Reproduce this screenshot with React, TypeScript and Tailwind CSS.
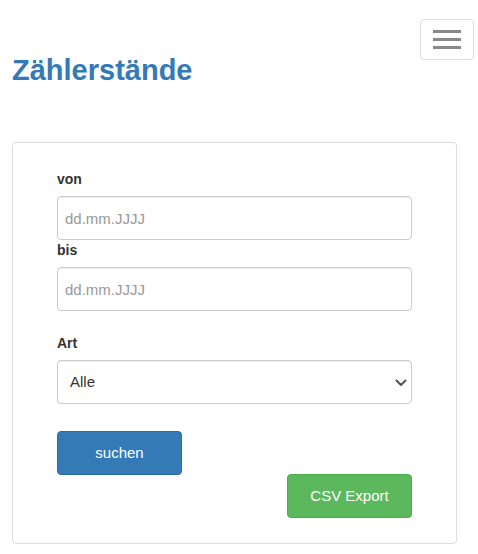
import { useState } from "react";

const font = { fontFamily: '"Liberation Sans", Arial, sans-serif' };

function DateField({ label }: { label: string }) {
  const [value, setValue] = useState("");
  return (
    <div className="flex flex-col">
      <label className="text-[14px] leading-[20px] font-bold text-[#333] mb-[7px]">{label}</label>
      <input
        value={value}
        onChange={(e) => setValue(e.target.value)}
        placeholder="dd.mm.JJJJ"
        className="w-full h-[44px] rounded-[4px] border border-[#ccc] pl-[7px] text-[15px] text-[#555] placeholder:text-[#999] shadow-[inset_0_1px_1px_rgba(0,0,0,0.075)] outline-none"
      />
    </div>
  );
}

export default function App() {
  const [art, setArt] = useState("Alle");

  return (
    <div className="w-[478px] min-h-[554px] bg-white" style={font}>
      {/* Header */}
      <div className="flex justify-between items-start">
        <h1 className="mt-[54px] ml-[12px] text-[29px] leading-[33px] font-bold text-[#337ab7]">Zählerstände</h1>
        <button className="mt-[19px] mr-[4px] w-[54px] h-[41px] rounded-[4px] border border-[#ddd] flex flex-col items-center justify-center gap-[5px]">
          <span className="block w-[28px] h-[3px] bg-[#888]" />
          <span className="block w-[28px] h-[3px] bg-[#888]" />
          <span className="block w-[28px] h-[3px] bg-[#888]" />
        </button>
      </div>

      {/* Panel */}
      <div className="mt-[55px] ml-[12px] w-[445px] rounded-[4px] border border-[#ddd] pt-[26px] pb-[25px] pl-[44px]">
        <div className="w-[355px] flex flex-col">
          <DateField label="von" />
          <DateField label="bis" />

          <div className="flex flex-col mt-[22px]">
            <label className="text-[14px] leading-[20px] font-bold text-[#333] mb-[7px]">Art</label>
            <div className="relative">
              <select
                value={art}
                onChange={(e) => setArt(e.target.value)}
                className="w-full h-[44px] appearance-none rounded-[4px] border border-[#ccc] bg-white pl-[12px] text-[15px] text-[#333] shadow-[inset_0_1px_1px_rgba(0,0,0,0.075)] outline-none"
              >
                <option>Alle</option>
                <option>Strom</option>
                <option>Gas</option>
                <option>Wasser</option>
              </select>
              <svg className="absolute right-[5px] top-[19px] pointer-events-none" width="12" height="8" viewBox="0 0 12 8">
                <polyline points="1.5,1.5 6,6 10.5,1.5" fill="none" stroke="#555" strokeWidth="2" strokeLinecap="round" strokeLinejoin="round" />
              </svg>
            </div>
          </div>

          <button className="mt-[27px] w-[125px] h-[44px] rounded-[4px] border border-[#2e6da4] bg-[#337ab7] text-white text-[15px]">
            suchen
          </button>
          <div className="flex justify-end -mt-[1px]">
            <button className="w-[125px] h-[44px] rounded-[4px] border border-[#4cae4c] bg-[#5cb85c] text-white text-[15px]">
              CSV Export
            </button>
          </div>
        </div>
      </div>
    </div>
  );
}
